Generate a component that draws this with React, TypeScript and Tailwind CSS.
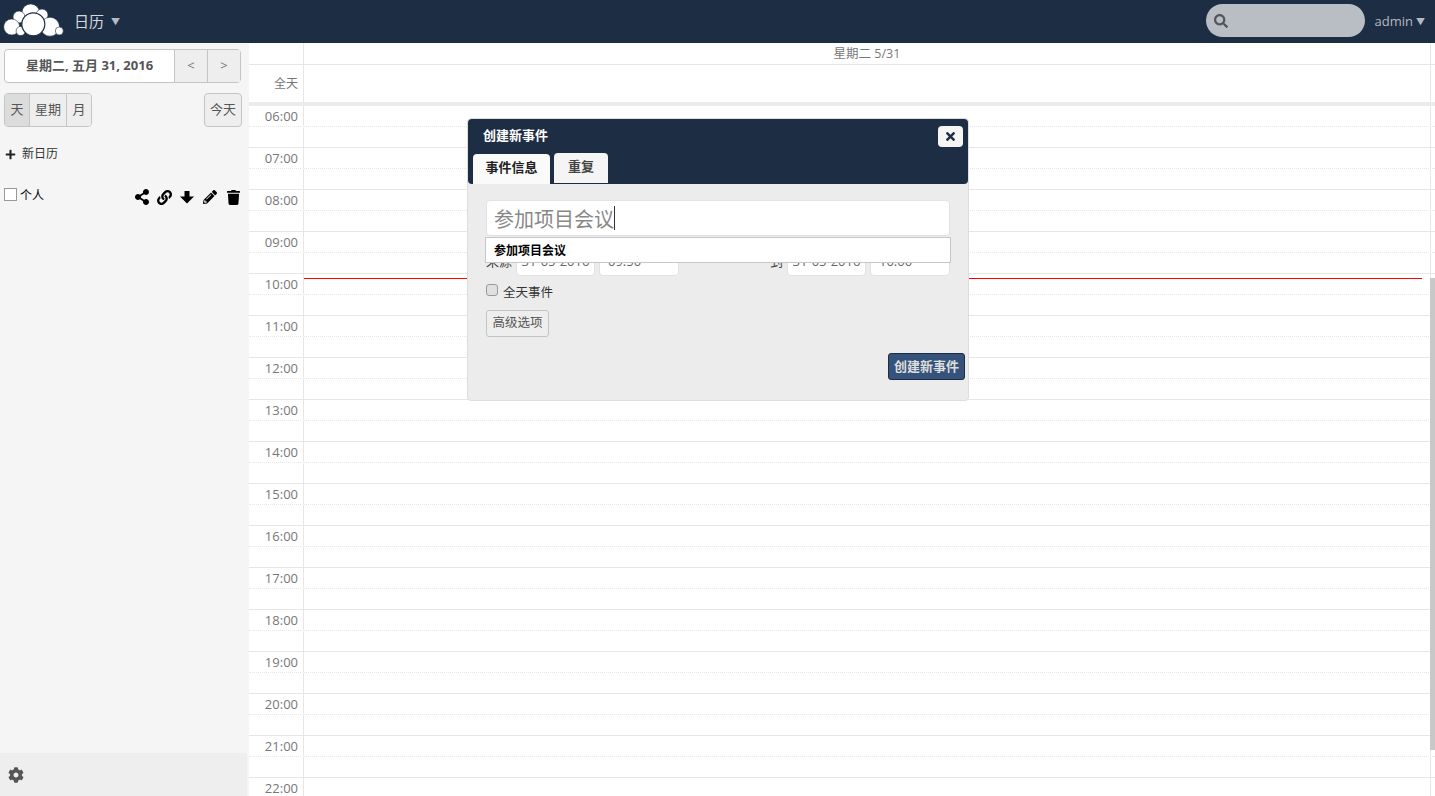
import { FaCog, FaLink, FaPencilAlt, FaPlus, FaSearch, FaShareAlt, FaTimes, FaTrash } from 'react-icons/fa'

const hours = ['06:00', '07:00', '08:00', '09:00', '10:00', '11:00', '12:00', '13:00', '14:00', '15:00', '16:00', '17:00', '18:00', '19:00', '20:00', '21:00', '22:00']

const font = "font-['Open_Sans','Noto_Sans_CJK_SC',sans-serif]"

function Logo() {
  return (
    <svg width="66" height="43" viewBox="0 0 66 43" className="shrink-0">
      <g fill="#fff" stroke="#1d2d44" strokeWidth="0.6">
        <circle cx="30.7" cy="12.7" r="8.8" />
        <circle cx="19" cy="17" r="6" />
        <circle cx="42" cy="15" r="6" />
        <circle cx="11.7" cy="27" r="8" />
        <circle cx="50" cy="26.7" r="9.5" />
        <circle cx="59.3" cy="31" r="4" />
        <circle cx="20.7" cy="31" r="4.6" />
      </g>
      <circle cx="33.3" cy="24.3" r="11.5" fill="#fff" stroke="#1d2d44" strokeWidth="1.2" />
    </svg>
  )
}

function ArrowDown() {
  return (
    <svg width="14" height="14" viewBox="0 0 14 14" fill="currentColor">
      <path d="M4.5 1h5v5.5H14L7 13.5 0 6.5h4.5z" />
    </svg>
  )
}

function Header() {
  return (
    <header className="flex h-[43px] shrink-0 items-center bg-[#1d2d44]">
      <Logo />
      <span className="ml-[8px] text-[15px] text-[#d5d8dc]">日历</span>
      <span className="ml-[7px] text-[9px] text-[#b5bac1]">▼</span>
      <div className="mb-[2px] ml-auto flex h-[33px] w-[159px] items-center rounded-full bg-[#b9bdc4] pl-[8px]">
        <FaSearch className="text-[14px] text-[#555]" />
      </div>
      <span className="ml-[10px] text-[13px] text-[#b5bac1]">admin</span>
      <span className="ml-[3px] mr-[10px] text-[9px] text-[#b5bac1]">▼</span>
    </header>
  )
}

function Sidebar() {
  return (
    <aside className="flex h-full w-[249px] shrink-0 flex-col bg-[#f5f5f5] text-[#333]">
      <div className="ml-[4px] mt-[6px] flex h-[34px] w-[237px] rounded border border-[#c4c4c4] text-[13px] text-[#555]">
        <div className="flex w-[169px] items-center justify-center rounded-l bg-white font-bold">星期二, 五月 31, 2016</div>
        <div className="flex w-[33px] items-center justify-center border-l border-[#c4c4c4] bg-[#eee] text-[#777]">&lt;</div>
        <div className="flex flex-1 items-center justify-center border-l border-[#c4c4c4] bg-[#eee] text-[#777]">&gt;</div>
      </div>

      <div className="ml-[4px] mr-[7px] mt-[10px] flex justify-between text-[13px] text-[#555]">
        <div className="flex h-[34px] overflow-hidden rounded border border-[#c4c4c4]">
          <div className="flex w-[24px] items-center justify-center bg-[#dcdcdc]">天</div>
          <div className="flex w-[37px] items-center justify-center border-l border-[#c4c4c4] bg-[#eee]">星期</div>
          <div className="flex w-[25px] items-center justify-center border-l border-[#c4c4c4] bg-[#eee]">月</div>
        </div>
        <div className="flex h-[34px] w-[38px] items-center justify-center rounded border border-[#c4c4c4] bg-[#eee]">今天</div>
      </div>

      <div className="ml-[5px] mt-[18px] flex h-[18px] items-center text-[12px]">
        <FaPlus className="text-[11px] text-[#222]" />
        <span className="ml-[6px]">新日历</span>
      </div>

      <div className="ml-[4px] mr-[9px] mt-[23px] flex h-[18px] items-center text-[12px] text-black">
        <span className="mt-[-2px] h-[13px] w-[13px] border border-[#999] bg-white" />
        <span className="ml-[3px] pt-[2px]">个人</span>
        <div className="ml-auto flex items-center pt-[4px]">
          <FaShareAlt className="h-[16px] w-[16px]" />
          <FaLink className="ml-[7px] h-[15px] w-[15px]" />
          <span className="ml-[8px]">
            <ArrowDown />
          </span>
          <FaPencilAlt className="ml-[9px] h-[14px] w-[14px]" />
          <FaTrash className="ml-[10px] h-[15px] w-[13px]" />
        </div>
      </div>

      <div className="mt-auto flex h-[43px] w-[247px] items-center bg-[#eee] pl-[8px]">
        <FaCog className="text-[16px] text-[#555]" />
      </div>
    </aside>
  )
}

function Calendar() {
  return (
    <main className="relative min-w-0 flex-1 overflow-hidden bg-white">
      <div className="flex h-[22px] border-b border-[#e6e6e6]">
        <div className="w-[55px] shrink-0 border-r border-[#e6e6e6]" />
        <div className="flex-1 text-center text-[12.5px] leading-[22px] text-[#777]">星期二 5/31</div>
        <div className="w-[5px] shrink-0 border-l border-[#e6e6e6]" />
      </div>
      <div className="flex h-[37px]">
        <div className="w-[55px] shrink-0 border-r border-[#e6e6e6] pr-[5px] pt-[10px] text-right text-[12px] text-[#777]">全天</div>
        <div className="flex-1" />
        <div className="w-[5px] shrink-0 border-l border-[#e6e6e6]" />
      </div>
      <div className="h-[4px] bg-[#ebebeb]" />

      <div className="flex flex-col">
        {hours.map((h) => (
          <div key={h} className="flex h-[42px] shrink-0">
            <div className="flex w-full flex-col border-b border-[#e6e6e6]">
              <div className="flex h-[21px] border-b border-dotted border-[#e6e6e6]">
                <div className="w-[55px] shrink-0 border-r border-[#e6e6e6] pr-[5px] text-right text-[13px] leading-[21px] text-[#777]">{h}</div>
                <div className="flex-1" />
                <div className="w-[5px] shrink-0 border-l border-[#e6e6e6]" />
              </div>
              <div className="flex flex-1">
                <div className="w-[55px] shrink-0 border-r border-[#e6e6e6]" />
                <div className="flex-1" />
                <div className="w-[5px] shrink-0 border-l border-[#e6e6e6]" />
              </div>
            </div>
          </div>
        ))}
      </div>

      {/* current time line */}
      <div className="absolute left-[55px] top-[235px] h-px w-[1118px] bg-[#f00]" />
      {/* scrollbar */}
      <div className="absolute right-0 top-[235px] h-[472px] w-[5px] bg-[#c8c8c8]" />
    </main>
  )
}

function Dialog() {
  return (
    <div className="absolute left-[467px] top-[118px] h-[283px] w-[502px] rounded border border-[#ddd] bg-[#ececec]">
      <div className="relative h-[65px] rounded bg-[#1d2d44]">
        <div className="pl-[15px] pt-[7px] text-[13px] font-bold leading-[18px] text-white">创建新事件</div>
        <button className="absolute right-[5px] top-[7px] flex h-[21px] w-[25px] items-center justify-center rounded bg-[#f5f5f5] text-[#1d2d44]">
          <FaTimes className="text-[13px]" />
        </button>
        <div className="absolute bottom-0 left-[5px] flex items-end gap-[4px] text-[13px] font-bold">
          <div className="flex h-[30px] w-[77px] items-center justify-center rounded-t bg-[#fafafa] pb-[2px] text-[#222]">事件信息</div>
          <div className="mb-px flex h-[30px] w-[54px] items-center justify-center rounded-t bg-[#f5f5f5] pb-[2px] text-[#444]">重复</div>
        </div>
      </div>

      <div className="relative px-[18px] pt-[16px]">
        <div className="flex h-[36px] items-center rounded-sm border border-[#e2e2e2] bg-white pl-[7px] pt-[3px] text-[20px] text-[#888]">
          参加项目会议<span className="mt-[-3px] h-[24px] w-px bg-[#333]" />
        </div>
        <div className="mt-[10px] flex h-[30px] items-center text-[13px] text-[#444]">
          <span className="w-[30px] pt-[2px]">来源</span>
          <div className="flex h-[30px] w-[79px] items-center justify-center rounded-sm border border-[#e2e2e2] bg-white pt-[2px] text-[#666]">31-05-2016</div>
          <div className="ml-[4px] flex h-[30px] w-[80px] items-center rounded-sm border border-[#e2e2e2] bg-white pl-[8px] pt-[2px] text-[#666]">09:50</div>
          <span className="ml-auto mr-[4px] pt-[2px]">到</span>
          <div className="flex h-[30px] w-[79px] items-center justify-center rounded-sm border border-[#e2e2e2] bg-white pt-[2px] text-[#666]">31-05-2016</div>
          <div className="ml-[4px] flex h-[30px] w-[80px] items-center rounded-sm border border-[#e2e2e2] bg-white pl-[8px] pt-[2px] text-[#666]">10:00</div>
        </div>

        {/* autocomplete over the date row */}
        <div className="absolute left-[17px] right-[17px] top-[53px] flex h-[26px] items-center border border-[#c5c5cc] bg-white pl-[8px] pt-px text-[12px] font-bold text-black">
          参加项目会议
        </div>

        <div className="mt-[8px] flex h-[16px] items-center text-[12.5px] text-[#333]">
          <span className="mt-[-4px] h-[12px] w-[12px] rounded-[3px] border border-[#999] bg-[#e0e0e0]" />
          <span className="ml-[5px] pt-[2px]">全天事件</span>
        </div>
        <button className="mt-[10px] block h-[27px] w-[63px] rounded-[3px] border border-[#c4c4c4] bg-[#eee] text-[12.5px] text-[#555]">高级选项</button>
      </div>

      <button className="absolute bottom-[20px] right-[3px] h-[27px] w-[77px] rounded-[3px] border border-[#1d2d44] bg-[#35537a] pt-px text-[13px] font-bold text-[#ddd]">创建新事件</button>
    </div>
  )
}

export default function App() {
  return (
    <div className={`relative flex h-[796px] w-[1435px] flex-col overflow-hidden bg-white ${font}`}>
      <Header />
      <div className="flex min-h-0 flex-1">
        <Sidebar />
        <Calendar />
      </div>
      <Dialog />
    </div>
  )
}
